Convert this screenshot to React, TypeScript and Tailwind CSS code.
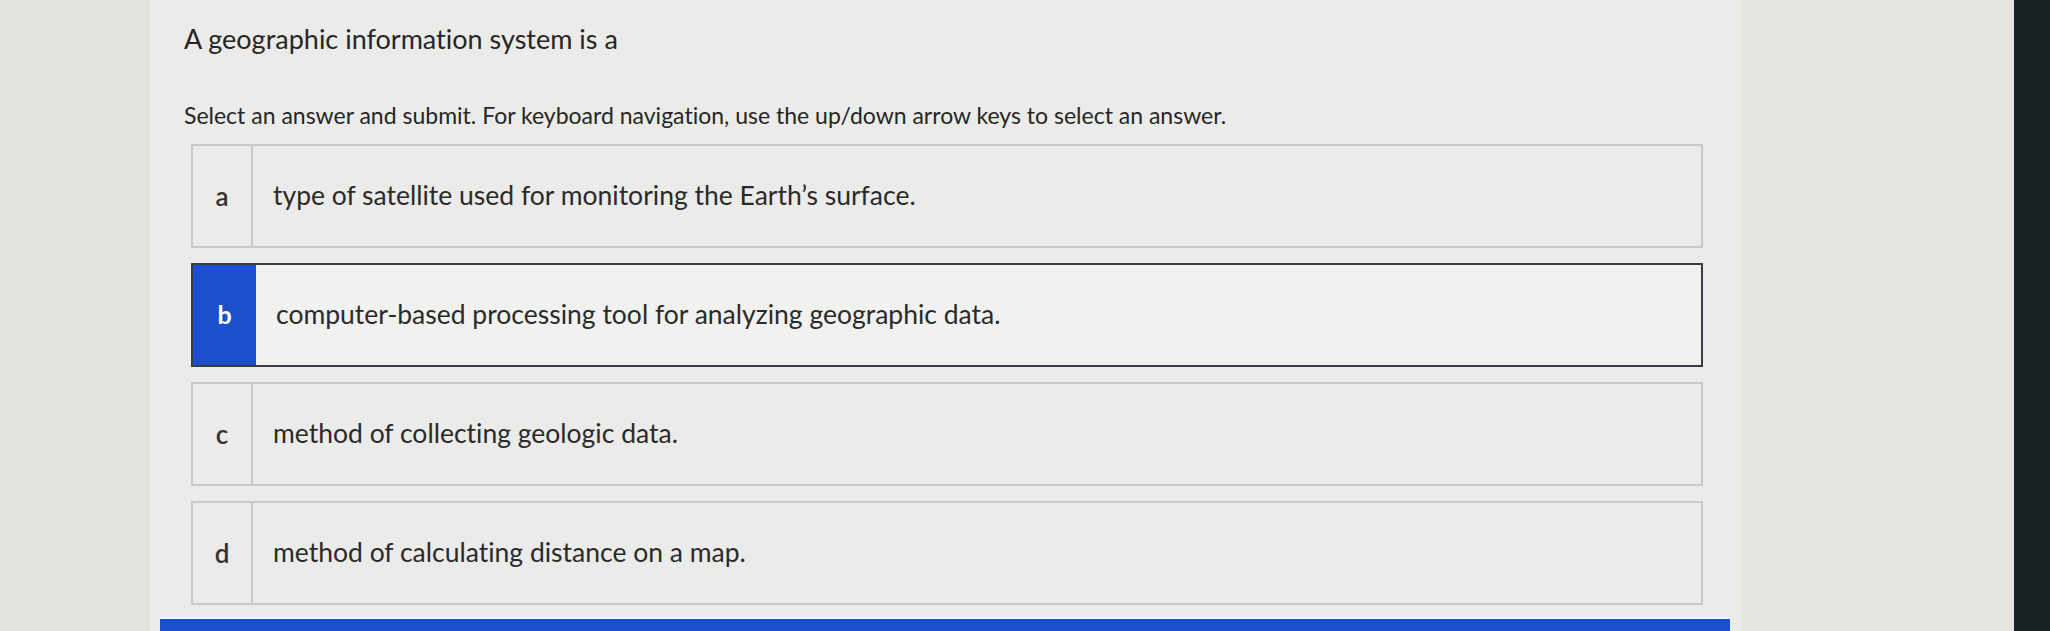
import React from "react";

interface Choice {
  key: string;
  text: string;
}

const choices: Choice[] = [
  { key: "a", text: "type of satellite used for monitoring the Earth\u2019s surface." },
  { key: "b", text: "computer-based processing tool for analyzing geographic data." },
  { key: "c", text: "method of collecting geologic data." },
  { key: "d", text: "method of calculating distance on a map." },
];

const selected = "b";

const ChoiceRow: React.FC<{ choice: Choice; active: boolean }> = ({ choice, active }) => {
  if (active) {
    return (
      <div className="flex h-[104px] border-2 border-[#363b45] bg-[#f1f1ef]">
        <div className="flex w-[63px] items-center justify-center bg-[#1c4fcb] text-[25px] font-bold text-white">
          {choice.key}
        </div>
        <div className="flex items-center pl-[20px] text-[26.5px] text-[#2a2a2a]">{choice.text}</div>
      </div>
    );
  }
  return (
    <div className="flex h-[104px] border-2 border-[#c9cac8] bg-[#ebebe9]">
      <div className="flex w-[60px] items-center justify-center border-r-2 border-[#c9cac8] text-[26px] font-semibold text-[#333]">
        {choice.key}
      </div>
      <div className="flex items-center pl-[20px] text-[26.5px] text-[#2a2a2a]">{choice.text}</div>
    </div>
  );
};

export default function App() {
  return (
    <div
      className="flex h-[631px] w-[2050px] overflow-hidden bg-[#e4e4e1] [font-variant-ligatures:none]"
      style={{ fontFamily: "Lato, 'Liberation Sans', sans-serif" }}
    >
      {/* left margin outside the panel */}
      <div className="w-[150px] shrink-0 bg-[#e2e2df]" />

      {/* question panel */}
      <div className="flex w-[1592px] shrink-0 flex-col bg-[#ebebe9] pl-[34px]">
        <h1 className="mt-[21px] text-[27px] leading-[36px] font-normal text-[#262626]">
          A geographic information system is a
        </h1>
        <p className="mt-[43px] text-[23px] leading-[30px] text-[#262626]">
          Select an answer and submit. For keyboard navigation, use the up/down arrow keys to select an answer.
        </p>

        <div className="mt-[14px] ml-[7px] flex w-[1512px] flex-col gap-[15px]">
          {choices.map((c) => (
            <ChoiceRow key={c.key} choice={c} active={c.key === selected} />
          ))}
        </div>

        {/* submit bar peeking in at the bottom */}
        <div className="mt-[12px] -ml-[24px] w-[1570px] flex-1 border-t-2 border-[#f4f6fb] bg-[#1b4fcb]" />
      </div>

      {/* right side of the screen */}
      <div className="flex-1 bg-[#e6e6e3]" />
      <div className="w-[36px] shrink-0 bg-[#1b2224]" />
    </div>
  );
}
